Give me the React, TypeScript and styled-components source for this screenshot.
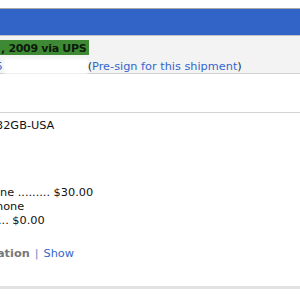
import React from "react";
import styled, { createGlobalStyle } from "styled-components";

const Global = createGlobalStyle`
  html, body { margin: 0; padding: 0; background: #ffffff; }
  body {
    font-family: "DejaVu Sans", "Verdana", sans-serif;
    font-size: 11.3px;
    color: #111111;
    overflow: hidden;
  }
`;

const Page = styled.div`
  width: 300px;
  height: 300px;
  padding-top: 8px;
  box-sizing: border-box;
  overflow: hidden;
`;

const Header = styled.div`
  height: 26px;
  border-top: 1px solid #a9a9a9;
  background: #3264c8;
`;

const Panel = styled.div`
  height: 39px;
  box-sizing: border-box;
  padding-top: 4px;
  background: #f3f3f3;
  border-top: 1px solid #c4c4c4;
  border-bottom: 1px solid #d2d2d2;
`;

const Shipped = styled.div`
  width: 89px;
  height: 15px;
  box-sizing: border-box;
  padding-top: 3px;
  line-height: 12px;
  background: #3e8a34;
  color: #0d1a0b;
  font-weight: bold;
  font-size: 11px;
  letter-spacing: -0.3px;
  white-space: nowrap;
  overflow: hidden;
`;

const Clip = styled.span<{ $shift: number }>`
  display: inline-block;
  margin-left: ${(p) => p.$shift}px;
`;

const TrackRow = styled.div`
  margin-top: 5px;
  line-height: 13px;
  height: 13px;
  white-space: nowrap;
  display: flex;
  align-items: center;
`;

const Link = styled.a`
  color: #3366cc;
  text-decoration: none;
`;

const Redacted = styled.span`
  display: inline-block;
  width: 82px;
  height: 13px;
  background: #ffffff;
  box-shadow: 0 0 3px 1px #ffffff;
  margin: 0 1px 0 2px;
`;

const Paren = styled.span`
  color: #2a2a2a;
`;

const Rule = styled.div`
  margin-top: 38px;
  height: 1px;
  background: #d3d3d3;
`;

const Line = styled.div<{ $gap?: number }>`
  margin-top: ${(p) => p.$gap ?? 0}px;
  line-height: 14px;
  height: 14px;
  white-space: nowrap;
  color: #111111;
`;

const Muted = styled.span`
  color: #777777;
  font-weight: bold;
`;

const Pipe = styled.span`
  color: #6b86c9;
  margin: 0 5px 0 5px;
`;

const Footer = styled.div`
  margin-top: 25px;
  height: 3px;
  background: #e2e2e2;
`;

export default function App() {
  return (
    <>
      <Global />
      <Page>
        <Header />
        <Panel>
          <Shipped>
            <Clip $shift={1}>, 2009 via UPS</Clip>
          </Shipped>
          <TrackRow>
            <Clip $shift={-4.5}>
              <Link href="#">5</Link>
            </Clip>
            <Redacted />
            <Paren>(</Paren>
            <Link href="#">Pre-sign for this shipment</Link>
            <Paren>)</Paren>
          </TrackRow>
        </Panel>
        <Rule />
        <Line $gap={6}>
          <Clip $shift={-4}>32GB-USA</Clip>
        </Line>
        <Line $gap={53}>
          <Clip $shift={0}>ne ......... $30.00</Clip>
        </Line>
        <Line>
          <Clip $shift={-4}>hone</Clip>
        </Line>
        <Line>
          <Clip $shift={-2}>... $0.00</Clip>
        </Line>
        <Line $gap={19}>
          <Clip $shift={-3}>
            <Muted>ation</Muted>
          </Clip>
          <Pipe>|</Pipe>
          <Link href="#">Show</Link>
        </Line>
        <Footer />
      </Page>
    </>
  );
}
